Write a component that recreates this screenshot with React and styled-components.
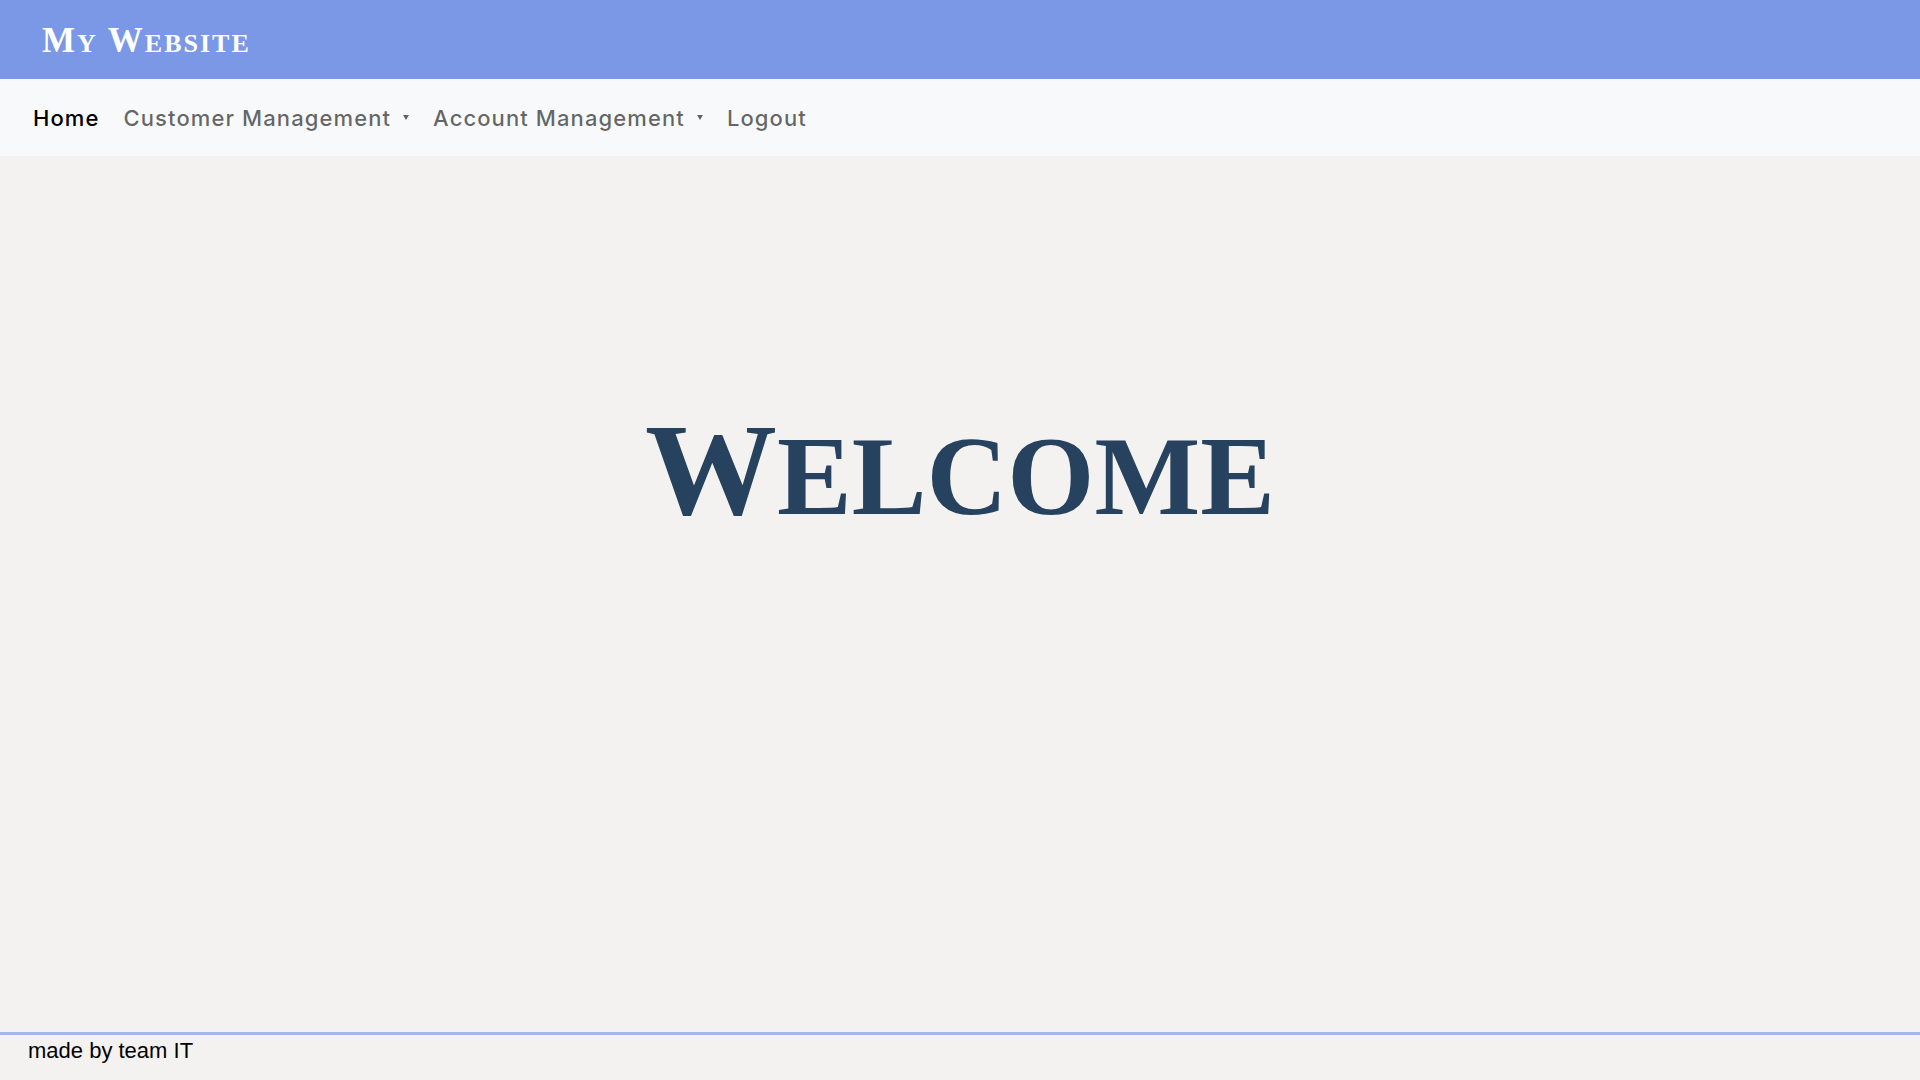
import React from 'react';
import styled, { createGlobalStyle } from 'styled-components';

const GlobalStyle = createGlobalStyle`
  html, body {
    margin: 0;
    padding: 0;
    background: #f3f2f0;
  }
  * { box-sizing: border-box; }
`

const Page = styled.div`
  min-height: 100vh;
  display: flex;
  flex-direction: column;
`

const Header = styled.header`
  height: 79px;
  background: #7b98e6;
  display: flex;
  align-items: center;
  padding-left: 42px;
  padding-top: 2px;
`

const Logo = styled.div`
  font-family: "Liberation Serif", serif;
  font-weight: bold;
  color: #fff;
  display: flex;
  align-items: baseline;
  letter-spacing: 2px;
`

const Big = styled.span`
  font-size: ${p => p.size}px;
  line-height: 1;
`

const Small = styled.span`
  font-size: ${p => p.size}px;
  line-height: 1;
  margin-right: ${p => p.gap || 0}px;
`

const Nav = styled.nav`
  height: 77px;
  background: #f8f9fa;
  display: flex;
  align-items: center;
  padding-left: 21px;
`

const NavLink = styled.a`
  font-family: Inter, "Open Sans", sans-serif;
  font-weight: 500;
  font-size: 22px;
  letter-spacing: 1.1px;
  color: ${p => p.active ? '#000' : 'rgba(0,0,0,0.6)'};
  padding: 0 12px;
  display: flex;
  align-items: center;
  text-decoration: none;
  cursor: pointer;
`

const Caret = styled.span`
  display: inline-block;
  margin-left: 12px;
  border-top: 5px solid rgba(0,0,0,0.6);
  border-left: 3px solid transparent;
  border-right: 3px solid transparent;
`

const Main = styled.main`
  flex: 1;
  display: flex;
  justify-content: center;
  padding-top: 248px;
`

const Welcome = styled.h1`
  margin: 0;
  font-family: "Liberation Serif", serif;
  font-weight: bold;
  color: #27425e;
  display: flex;
  align-items: baseline;
  align-self: flex-start;
`

const Footer = styled.footer`
  border-top: 3px solid #a6b7ee;
  height: 48px;
  padding-left: 28px;
  padding-top: 3px;
  font-family: "Liberation Sans", Arial, sans-serif;
  font-size: 22px;
  color: #000;
`

const SmallCaps = ({ text, big, small, gap }) => (
  <>
    {text.split(' ').map((word, i, arr) => (
      <React.Fragment key={i}>
        <Big size={big}>{word[0]}</Big>
        <Small size={small} gap={i < arr.length - 1 ? gap : 0}>{word.slice(1).toUpperCase()}</Small>
      </React.Fragment>
    ))}
  </>
)

export default function App() {
  return (
    <Page>
      <GlobalStyle />
      <Header>
        <Logo>
          <SmallCaps text="My Website" big={35} small={26} gap={10} />
        </Logo>
      </Header>
      <Nav>
        <NavLink active>Home</NavLink>
        <NavLink>Customer Management<Caret /></NavLink>
        <NavLink>Account Management<Caret /></NavLink>
        <NavLink>Logout</NavLink>
      </Nav>
      <Main>
        <Welcome>
          <SmallCaps text="Welcome" big={132} small={112} />
        </Welcome>
      </Main>
      <Footer>made by team IT</Footer>
    </Page>
  );
}
